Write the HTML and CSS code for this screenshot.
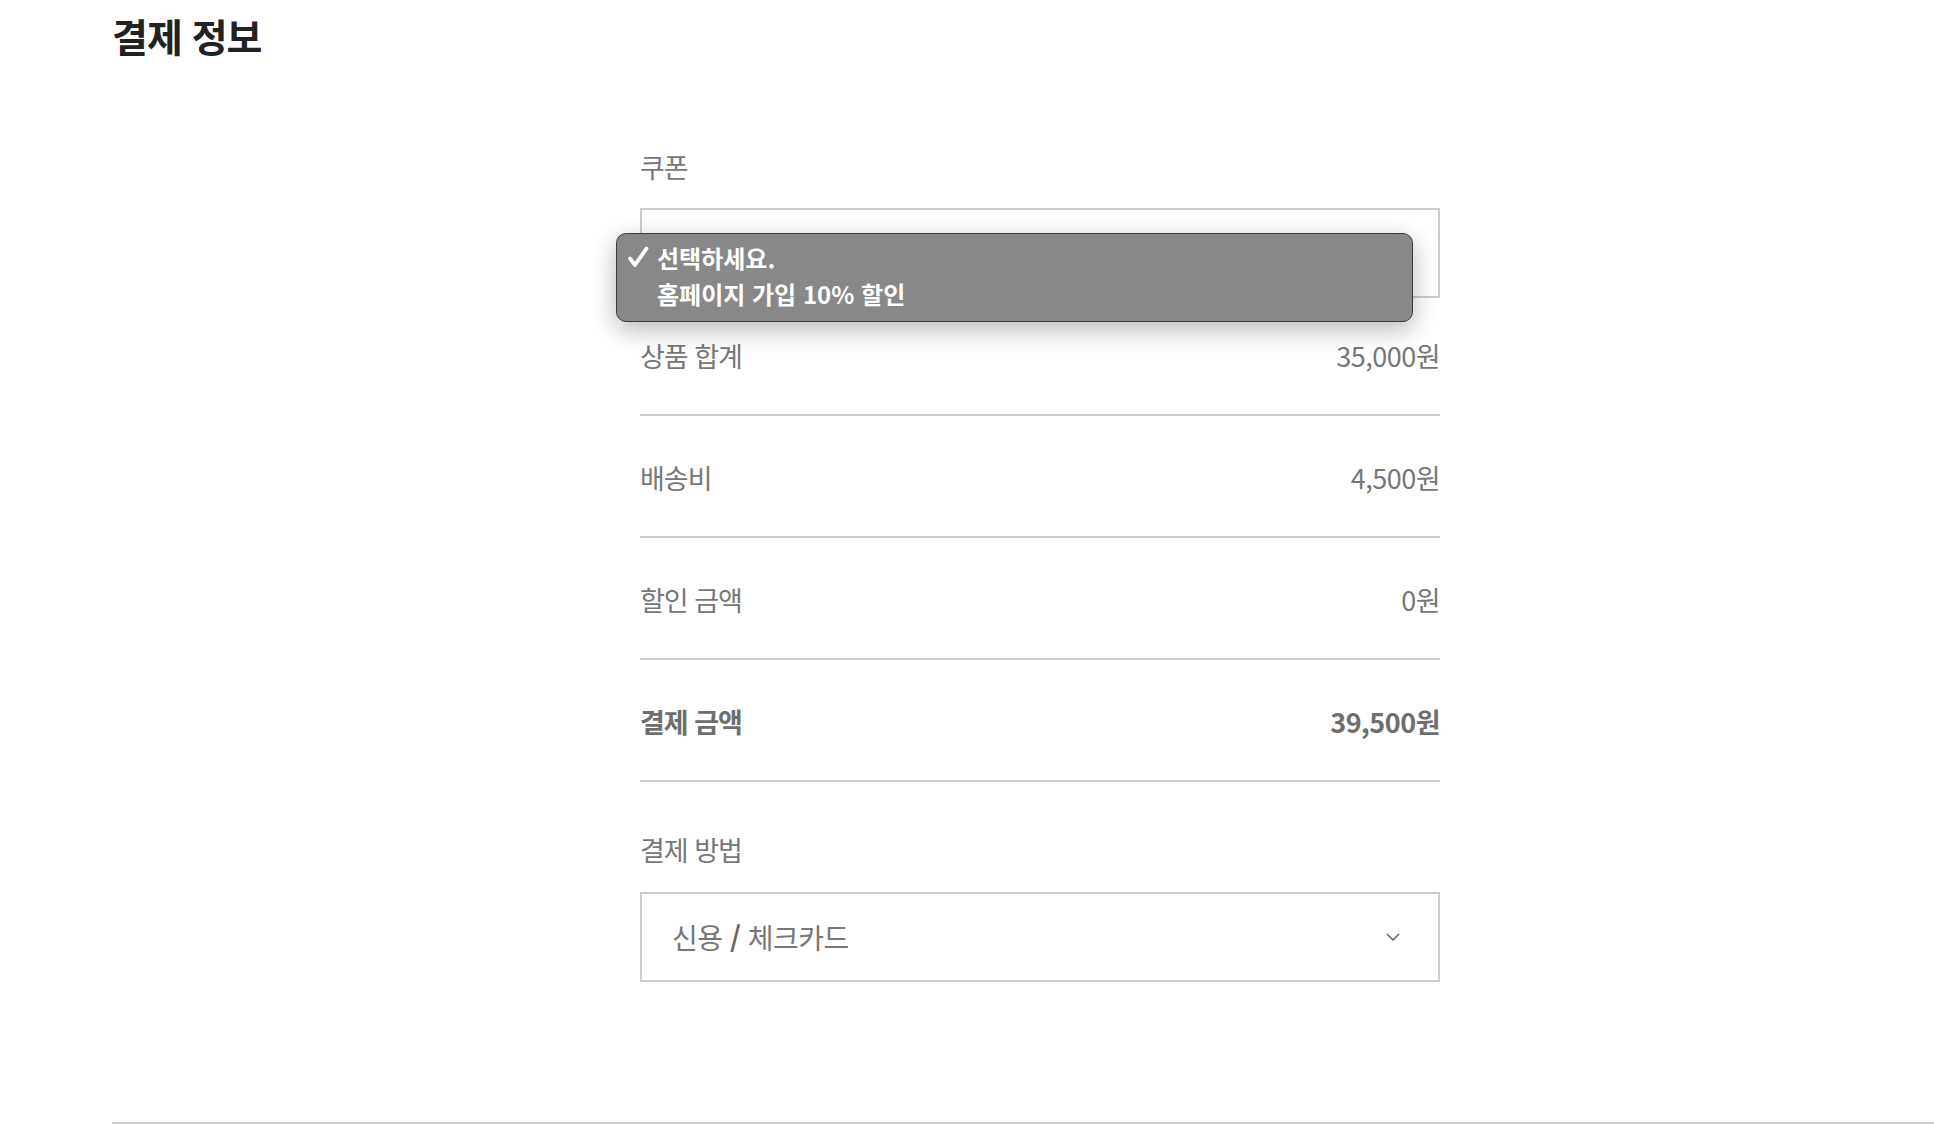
FILE: index.html
```html
<!DOCTYPE html>
<html lang="ko">
<head>
<meta charset="utf-8">
<title>결제 정보</title>
<link rel="stylesheet" href="styles.css">
</head>
<body>
<div class="page">
  <h1 class="title">결제 정보</h1>
  <div class="form">
    <div class="field">
      <div class="field-label">쿠폰</div>
      <div class="coupon-wrap">
        <div class="select-box coupon-box"></div>
        <div class="popup">
          <div class="popup-item">
            <span class="check">
              <svg width="22" height="22" viewBox="0 0 22 22"><path d="M3 12.5 L8 19 L19.5 2.5" fill="none" stroke="#fff" stroke-width="3.8" stroke-linecap="round" stroke-linejoin="round"/></svg>
            </span>
            <span>선택하세요.</span>
          </div>
          <div class="popup-item">
            <span class="check"></span>
            <span>홈페이지 가입 10% 할인</span>
          </div>
        </div>
      </div>
    </div>
    <div class="rows">
      <div class="row row-first"><span>상품 합계</span><span class="val">35,000원</span></div>
      <div class="row"><span>배송비</span><span class="val">4,500원</span></div>
      <div class="row"><span>할인 금액</span><span class="val">0원</span></div>
      <div class="row row-total"><span>결제 금액</span><span class="val">39,500원</span></div>
    </div>
    <div class="field field-pay">
      <div class="field-label">결제 방법</div>
      <div class="select-box pay-box">
        <span class="pay-text">신용 <b class="slash">/</b> 체크카드</span>
        <svg class="chevron" width="14" height="8" viewBox="0 0 14 8"><path d="M1 1 L7 7 L13 1" fill="none" stroke="#666" stroke-width="1.5"/></svg>
      </div>
    </div>
  </div>
  <div class="divider"></div>
</div>
</body>
</html>
```
FILE: styles.css
```css
html, body {
  margin: 0;
  padding: 0;
  background: #fff;
}
body {
  font-family: "Noto Sans CJK KR", "Noto Sans", sans-serif;
  color: #777;
  overflow: hidden;
}
.page {
  padding-top: 9px;
  padding-left: 112px;
}
.title {
  margin: 0;
  font-size: 39px;
  line-height: 52px;
  font-weight: 700;
  color: #222;
  letter-spacing: -1px;
}
.form {
  width: 800px;
  margin-left: 528px;
  margin-top: 86px;
}
.field-label {
  font-size: 27px;
  line-height: 40px;
  margin-bottom: 21px;
  letter-spacing: -1px;
  color: #777;
}
.select-box {
  box-sizing: border-box;
  border: 2px solid #ccc;
  background: #fff;
}
.coupon-wrap {
  position: relative;
}
.coupon-box {
  height: 90px;
}
.popup {
  position: absolute;
  left: -24px;
  top: 25px;
  width: 797px;
  height: 89px;
  box-sizing: border-box;
  padding: 5px 11px 0;
  background: #888;
  border: 1px solid #3a3a3a;
  border-radius: 10px;
  box-shadow: 0 8px 26px rgba(0, 0, 0, 0.28);
  color: #fff;
  font-size: 24px;
  font-weight: 700;
  letter-spacing: 0;
}
.popup-item {
  display: flex;
  align-items: center;
  height: 36px;
}
.check {
  width: 30px;
  flex: none;
  display: flex;
  align-items: center;
  margin-left: -1px;
}
.rows {
  display: flex;
  flex-direction: column;
}
.row {
  box-sizing: border-box;
  height: 122px;
  border-bottom: 2px solid #ccc;
  display: flex;
  align-items: center;
  justify-content: space-between;
  font-size: 27px;
  letter-spacing: -1px;
  color: #777;
  padding-top: 3px;
}
.row-first {
  height: 118px;
  padding-top: 0;
  padding-bottom: 2px;
}
.row .val {
  letter-spacing: -0.5px;
}
.row-total {
  font-weight: 700;
  color: #6e6e6e;
}
.field-pay {
  margin-top: 48px;
}
.field-pay .field-label {
  margin-bottom: 22px;
}
.pay-box {
  height: 90px;
  display: flex;
  align-items: center;
  justify-content: space-between;
  padding: 0 38px 0 30px;
}
.pay-text {
  font-size: 28px;
  letter-spacing: -0.5px;
  color: #777;
}
.slash {
  font-weight: 700;
  color: #666;
}
.chevron {
  display: block;
}
.divider {
  margin-top: 140px;
  height: 2px;
  background: #ccc;
  width: 1900px;
}
```
